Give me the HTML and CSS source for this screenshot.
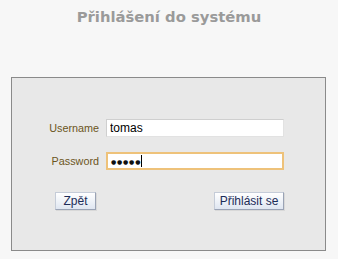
FILE: index.html
```html
<!DOCTYPE html>
<html lang="cs">
<head>
<meta charset="utf-8">
<title>Přihlášení do systému</title>
<link rel="stylesheet" href="styles.css">
</head>
<body>
<h1 class="title">Přihlášení do systému</h1>
<form class="panel">
  <div class="fields">
    <label class="label" for="u">Username</label>
    <input class="input" id="u" type="text" value="tomas">
    <label class="label" for="p">Password</label>
    <div class="input input-focus"><span class="dots">●●●●●</span><span class="caret"></span></div>
  </div>
  <div class="actions">
    <button type="button" class="btn btn-back">Zpět</button>
    <button type="button" class="btn btn-login">Přihlásit se</button>
  </div>
</form>
</body>
</html>
```
FILE: styles.css
```css
html, body {
  margin: 0;
  padding: 0;
  background: #f7f7f7;
}
body {
  width: 338px;
  height: 259px;
  overflow: hidden;
  font-family: "DejaVu Sans", Tahoma, sans-serif;
}
.title {
  margin: 0;
  padding-top: 7px;
  height: 77px;
  box-sizing: border-box;
  text-align: center;
  font-size: 14.8px;
  line-height: 20px;
  font-weight: bold;
  color: #9a9a9a;
}
.panel {
  margin: 0 0 0 11px;
  width: 315px;
  height: 174px;
  box-sizing: border-box;
  border: 1px solid #8a8a8a;
  background: #e8e8e8;
  padding: 41px 0 0 0;
}
.fields {
  display: grid;
  grid-template-columns: 87px 178px;
  column-gap: 7px;
  row-gap: 15px;
  align-items: center;
}
.label {
  text-align: right;
  font-family: "Liberation Sans", Arial, sans-serif;
  font-size: 10.8px;
  color: #6b5522;
}
.input {
  box-sizing: border-box;
  width: 178px;
  height: 18px;
  margin: 0;
  padding: 0 3px;
  border: 1px solid #cfcfcf;
  border-right-color: #e2e2e2;
  border-bottom-color: #e2e2e2;
  background: #ffffff;
  font-family: "Liberation Sans", Arial, sans-serif;
  font-size: 12px;
  color: #000;
  outline: none;
}
.input-focus {
  display: flex;
  align-items: center;
  border: 2px solid #eec27a;
  padding: 0 2px 0 3px;
}
.dots {
  font-family: "DejaVu Sans", sans-serif;
  font-size: 6px;
  letter-spacing: 0.8px;
  color: #111;
}
.caret {
  display: block;
  width: 1px;
  height: 12px;
  background: #000;
}
.actions {
  display: flex;
  justify-content: space-between;
  margin-top: 22px;
  padding: 0 41px 0 43px;
}
.btn {
  box-sizing: border-box;
  height: 18px;
  padding: 0;
  border: 1px solid #9aa3b5;
  border-top-color: #c5ccd8;
  border-left-color: #c5ccd8;
  background: linear-gradient(#ffffff, #dfe6f1);
  font-family: "Liberation Sans", Arial, sans-serif;
  font-size: 12px;
  color: #1c2c58;
  box-shadow: 1px 1px 0 #d8d8d8;
}
.btn-back {
  width: 41px;
}
.btn-login {
  width: 70px;
}
```
